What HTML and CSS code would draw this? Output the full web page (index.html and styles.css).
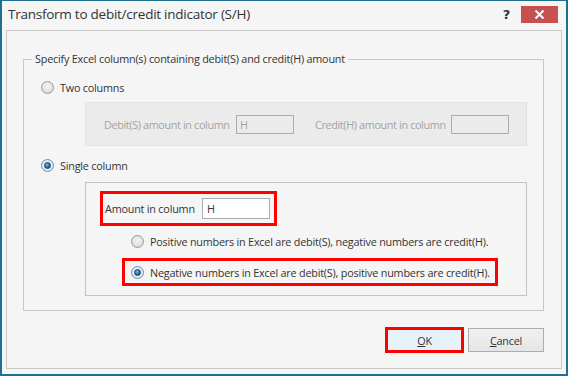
FILE: index.html
```html
<!DOCTYPE html>
<html>
<head>
<meta charset="utf-8">
<link rel="stylesheet" href="styles.css">
</head>
<body>
<div class="window">
  <div class="titlebar">
    <span class="title">Transform to debit/credit indicator (S/H)</span>
    <span class="help">?</span>
    <span class="close"><svg width="11" height="9" viewBox="0 0 11 9"><path d="M1.5 0.5 L9.5 8.5 M9.5 0.5 L1.5 8.5" stroke="#fff" stroke-width="2"/></svg></span>
  </div>
  <div class="panel">
    <fieldset class="group">
      <legend>Specify Excel column(s) containing debit(S) and credit(H) amount</legend>
      <div class="radio-row row-two">
        <span class="radio"></span><span class="label">Two columns</span>
      </div>
      <div class="subpanel disabled">
        <span class="lbl lbl-debit">Debit(S) amount in column</span>
        <span class="textbox tb-dis">H</span>
        <span class="lbl lbl-credit">Credit(H) amount in column</span>
        <span class="textbox tb-dis"></span>
      </div>
      <div class="radio-row row-single">
        <span class="radio checked"></span><span class="label">Single column</span>
      </div>
      <div class="subpanel active">
        <div class="hl hl-amount">
          <span class="lbl lbl-amount">Amount in column</span>
          <span class="textbox tb-amount">H</span>
        </div>
        <div class="radio-row row-pos">
          <span class="radio"></span><span class="label">Positive numbers in Excel are debit(S), negative numbers are credit(H).</span>
        </div>
        <div class="hl hl-neg">
          <span class="radio checked"></span><span class="label">Negative numbers in Excel are debit(S), positive numbers are credit(H).</span>
        </div>
      </div>
    </fieldset>
    <div class="buttons">
      <span class="btn btn-ok"><u>O</u>K</span>
      <span class="btn btn-cancel"><u>C</u>ancel</span>
    </div>
  </div>
</div>
</body>
</html>
```
FILE: styles.css
```css
* { box-sizing: border-box; }
html, body { margin: 0; padding: 0; }
body {
  width: 568px;
  height: 376px;
  overflow: hidden;
  font-family: "Open Sans", "Noto Sans", sans-serif;
  font-size: 10.8px;
  letter-spacing: -0.2px;
  color: #333;
}
.window {
  width: 568px;
  height: 376px;
  background: #f5f5f5;
  border: 2px solid #1f6f8f;
  border-top-width: 1px;
}
.titlebar {
  height: 29px;
  display: flex;
  align-items: center;
  padding: 0 5px 3px 6px;
}
.title {
  font-size: 13.5px;
  color: #333;
  flex: 1;
  letter-spacing: -0.25px;
}
.help {
  font-weight: bold;
  font-size: 13px;
  color: #333;
  margin-right: 11px;
  font-family: "DejaVu Sans", sans-serif;
}
.close {
  width: 37px;
  height: 17px;
  background: #c75050;
  display: flex;
  align-items: center;
  justify-content: center;
  margin-right: 3px;
}
.panel {
  margin: 0 4px 0 4px;
  height: 339px;
  border: 1px solid #c6c6c6;
  padding: 20px 17px 0 16px;
}
.group {
  margin: 0;
  border: 1px solid #c8c8c8;
  padding: 0 16px 14px 0;
}
.group legend {
  margin-left: 8px;
  padding: 0 3px 0 3px;
  line-height: 16px;
  color: #333;
}
.radio-row {
  display: flex;
  align-items: center;
  height: 16px;
}
.radio {
  width: 13px;
  height: 13px;
  border-radius: 50%;
  border: 1px solid #9a9a9a;
  background: radial-gradient(circle at 50% 40%, #f4f4f4 0%, #e2e2e2 55%, #cfcfcf 100%);
  flex: none;
  position: relative;
}
.radio.checked {
  border-color: #6f8ea8;
  background: radial-gradient(circle at 50% 40%, #f2f2f2 0%, #dfe3e8 100%);
}
.radio.checked::after {
  content: "";
  position: absolute;
  left: 2px;
  top: 2px;
  width: 7px;
  height: 7px;
  border-radius: 50%;
  background: radial-gradient(circle at 40% 35%, #7ac3ee 0%, #1f78b8 50%, #0d3f6b 100%);
  border: 1px solid #15466f;
  box-sizing: border-box;
}
.label { margin-left: 6px; white-space: nowrap; }
.row-two { margin: 12px 0 0 17px; }
.row-single { margin: 11px 0 0 17px; }
.subpanel {
  margin-left: 61px;
  width: 442px;
}
.disabled {
  margin-top: 7px;
  height: 44px;
  background: #ebebeb;
  border: 1px solid #e2e2e2;
  display: flex;
  align-items: center;
  padding-left: 18px;
  color: #a3a3a3;
}
.lbl { white-space: nowrap; }
.lbl-debit { width: 132px; letter-spacing: -0.35px; }
.lbl-credit { width: 136px; margin-left: 21px; letter-spacing: -0.35px; }
.textbox {
  height: 19px;
  border: 1px solid #acacac;
  padding: 0 0 0 3px;
  line-height: 17px;
}
.tb-dis { width: 58px; background: #ebebeb; color: #a3a3a3; }
.active {
  margin-top: 9px;
  height: 114px;
  border: 1px solid #c3c3c3;
  padding-top: 8px;
}
.hl {
  border: 3px solid #ff0000;
  display: flex;
  align-items: center;
}
.hl-amount {
  margin-left: 14px;
  width: 177px;
  height: 35px;
  padding-left: 2px;
}
.lbl-amount { width: 97px; }
.tb-amount {
  width: 68px;
  height: 21px;
  background: #fff;
  border-color: #abadb3;
  padding-left: 4px;
  line-height: 19px;
}
.row-pos { margin: 7px 0 0 45px; }
.hl-neg {
  margin: 9px 0 0 36px;
  width: 376px;
  height: 28px;
  padding-left: 6px;
}
.buttons {
  display: flex;
  justify-content: flex-end;
  align-items: center;
  gap: 4px;
  margin-top: 16px;
}
.btn {
  display: flex;
  align-items: center;
  justify-content: center;
  color: #333;
}
.btn-ok {
  width: 79px;
  height: 26px;
  border: 3px solid #ff0000;
  background: #e5f1fb;
}
.btn-cancel {
  width: 76px;
  height: 24px;
  border: 1px solid #adadad;
  background: linear-gradient(#f0f0f0, #e5e5e5);
}
```
